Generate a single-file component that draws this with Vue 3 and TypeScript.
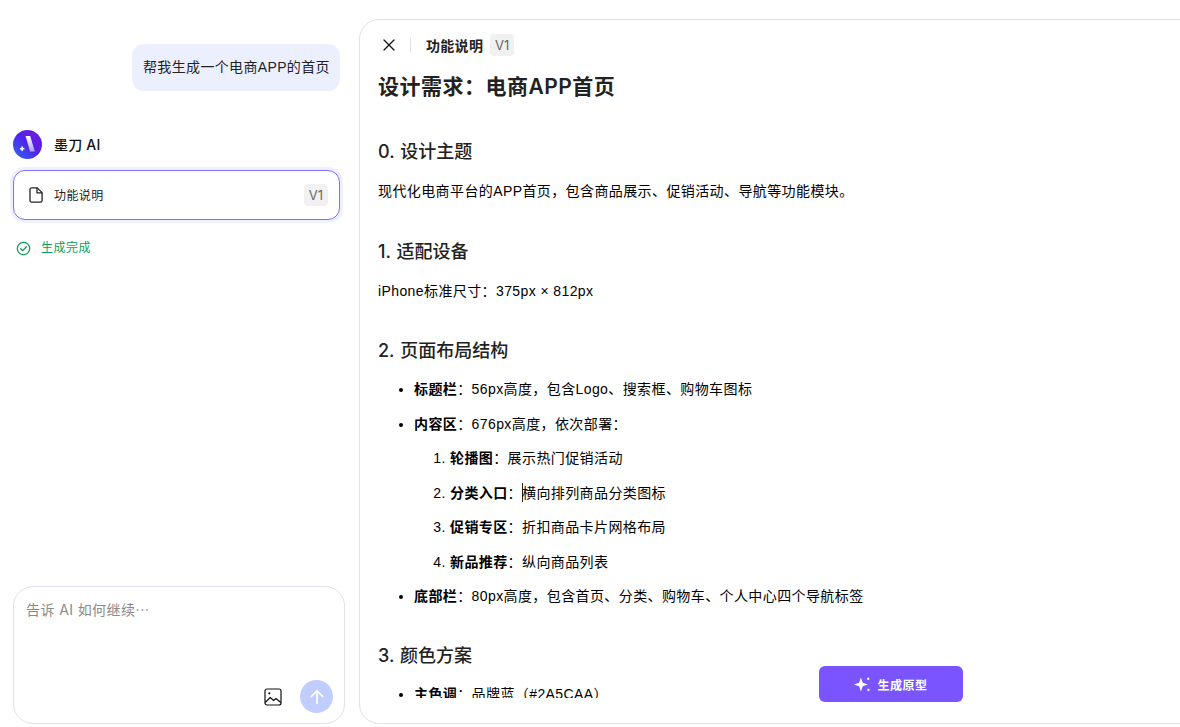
<script setup lang="ts">
const subItems: [string, string][] = [
  ['轮播图', '展示热门促销活动'],
  ['分类入口', '横向排列商品分类图标'],
  ['促销专区', '折扣商品卡片网格布局'],
  ['新品推荐', '纵向商品列表'],
]
</script>

<template>
  <div class="page">
    <aside class="chat">
      <div class="bubble-row"><div class="bubble">帮我生成一个电商APP的首页</div></div>
      <div class="agent">
        <svg class="avatar" viewBox="0 0 29 29" aria-hidden="true">
          <defs>
            <linearGradient id="avg" x1="0" y1="1" x2="1" y2="0">
              <stop offset="0" stop-color="#2a6cf5" />
              <stop offset="0.5" stop-color="#4f26ea" />
              <stop offset="1" stop-color="#7a10d8" />
            </linearGradient>
            <linearGradient id="bar" x1="0" y1="0" x2="0" y2="1">
              <stop offset="0" stop-color="#fff" />
              <stop offset="1" stop-color="#fff" stop-opacity="0.55" />
            </linearGradient>
          </defs>
          <circle cx="14.5" cy="14.5" r="14.5" fill="url(#avg)" />
          <path d="M12.6 6h4.6l4.6 15.5h-4.8z" fill="url(#bar)" />
          <path d="M9.2 16.6v4.4M7 18.8h4.4" stroke="#fff" stroke-width="1.6" />
        </svg>
        <span>墨刀 AI</span>
      </div>
      <div class="doc-card">
        <svg class="doc-icon" viewBox="0 0 14 16" fill="none" stroke="#222" stroke-width="1.3" stroke-linejoin="round" aria-hidden="true">
          <path d="M2.6.9h5.6l4.9 4.7v7.9a1.6 1.6 0 0 1-1.6 1.6H2.6A1.6 1.6 0 0 1 1 13.5V2.5A1.6 1.6 0 0 1 2.6.9z" />
          <path d="M8 1v4.8h5" />
        </svg>
        <span class="doc-name">功能说明</span>
        <span class="ver">V1</span>
      </div>
      <div class="status">
        <svg viewBox="0 0 16 16" fill="none" stroke="#0f9d58" stroke-width="1.4" aria-hidden="true">
          <circle cx="8" cy="8" r="6.6" />
          <path d="M5 8.2l2.2 2.1L11 6.2" stroke-linecap="round" stroke-linejoin="round" />
        </svg>
        <span>生成完成</span>
      </div>
      <div class="composer">
        <div class="placeholder">告诉 AI 如何继续⋯</div>
        <div class="tools">
          <svg class="img-icon" viewBox="0 0 18 18" fill="none" stroke="#111" stroke-width="1.2" aria-hidden="true">
            <rect x="1" y="1" width="16" height="16" rx="2" />
            <circle cx="5.3" cy="5.3" r="1.1" fill="#111" stroke="none" />
            <path d="M1.2 14.5l5-5 3.4 3 2.4-2 4.8 4" stroke-linejoin="round" />
          </svg>
          <div class="send">
            <svg viewBox="0 0 16 16" fill="none" stroke="#fff" stroke-width="1.6" stroke-linecap="round" stroke-linejoin="round" aria-hidden="true">
              <path d="M8 14.5V1.8M2.2 7.6L8 1.8l5.8 5.8" />
            </svg>
          </div>
        </div>
      </div>
    </aside>

    <main class="panel">
      <header class="panel-head">
        <svg class="close" viewBox="0 0 12 12" fill="none" stroke="#111" stroke-width="1.3" stroke-linecap="round" aria-hidden="true">
          <path d="M1 1l10 10M11 1L1 11" />
        </svg>
        <i class="sep"></i>
        <span class="head-title">功能说明</span>
        <span class="ver">V1</span>
      </header>
      <article class="doc">
        <h1>设计需求：电商APP首页</h1>
        <h2 class="first">0. 设计主题</h2>
        <p>现代化电商平台的APP首页，包含商品展示、促销活动、导航等功能模块。</p>
        <h2>1. 适配设备</h2>
        <p>iPhone标准尺寸：375px × 812px</p>
        <h2>2. 页面布局结构</h2>
        <ul>
          <li><b>标题栏</b>：56px高度，包含Logo、搜索框、购物车图标</li>
          <li>
            <b>内容区</b>：676px高度，依次部署：
            <ol>
              <li v-for="(item, i) in subItems" :key="item[0]">
                <b>{{ item[0] }}</b>：<i v-if="i === 1" class="caret"></i>{{ item[1] }}
              </li>
            </ol>
          </li>
          <li><b>底部栏</b>：80px高度，包含首页、分类、购物车、个人中心四个导航标签</li>
        </ul>
        <h2 class="after-list">3. 颜色方案</h2>
        <ul>
          <li><b>主色调</b>：品牌蓝（#2A5CAA）</li>
        </ul>
      </article>
      <button class="gen" type="button">
        <svg viewBox="0 0 16 16" fill="#fff" aria-hidden="true">
          <path d="M6.5 1.5l1.7 4.8 4.8 1.7-4.8 1.7-1.7 4.8-1.7-4.8L0 8l4.8-1.7z" />
          <circle cx="13.4" cy="2.6" r="1.1" />
          <circle cx="13.6" cy="13" r="1.1" />
        </svg>
        生成原型
      </button>
    </main>
  </div>
</template>

<style scoped>
.page {
  display: flex;
  width: 1180px;
  height: 727px;
  overflow: hidden;
  background: #fff;
  color: #111;
  font-family: Inter, "Noto Sans CJK SC", sans-serif;
  font-size: 14px;
}
.chat {
  flex: 0 0 359px;
  display: flex;
  flex-direction: column;
  padding: 44px 14px 3px 13px;
  box-sizing: border-box;
}
.bubble-row { display: flex; justify-content: flex-end; margin-right: 5px; }
.bubble {
  padding: 13px 11px;
  width: 208px;
  height: 47px;
  box-sizing: border-box;
  border-radius: 12px;
  background: #eceffe;
  font-family: "Liberation Sans", "Noto Sans CJK SC", sans-serif;
  line-height: 21px;
  letter-spacing: 0.35px;
  white-space: nowrap;
  color: #222;
}
.agent {
  display: flex;
  align-items: center;
  gap: 12px;
  margin-top: 39px;
  padding-bottom: 1px;
  font-weight: 500;
  letter-spacing: 0.2px;
  color: #111;
}
.agent span { margin-top: -2px; }
.avatar { width: 29px; height: 29px; }
.doc-card {
  display: flex;
  align-items: center;
  height: 50px;
  box-sizing: border-box;
  margin: 10px 5px 0 0;
  padding: 0 11px 2px 15px;
  border: 1px solid #7c6dfb;
  border-radius: 12px;
  box-shadow: 0 0 0 3px #eff0fd;
}
.doc-icon { width: 14px; height: 16px; margin-top: 2px; }
.doc-name { margin-left: 11px; font-size: 12px; letter-spacing: 0.4px; color: #222; }
.ver {
  display: flex;
  align-items: center;
  justify-content: center;
  width: 24px;
  height: 22px;
  border-radius: 4px;
  background: #f1f1f1;
  color: #666;
  font-size: 13px;
}
.doc-card .ver { margin-left: auto; margin-top: 2px; }
.status {
  display: flex;
  align-items: center;
  gap: 10px;
  margin: 19px 0 0 3px;
  color: #0f9d58;
  font-size: 12px;
  line-height: 18px;
  letter-spacing: 0.5px;
}
.status svg { width: 15px; height: 15px; }
.composer {
  display: flex;
  flex-direction: column;
  justify-content: space-between;
  width: 332px;
  height: 138px;
  margin-top: auto;
  padding: 13px 11px 10px 12px;
  box-sizing: border-box;
  border: 1px solid #e0e0ee;
  border-radius: 20px;
}
.placeholder { color: #8a8a8a; line-height: 20px; letter-spacing: 0.4px; }
.tools { display: flex; align-items: center; justify-content: flex-end; gap: 18px; }
.img-icon { width: 18px; height: 18px; }
.send {
  display: flex;
  align-items: center;
  justify-content: center;
  width: 33px;
  height: 33px;
  border-radius: 50%;
  background: #c2cdff;
}
.send svg { width: 16px; height: 16px; }

.panel {
  position: relative;
  flex: 0 0 842px;
  display: flex;
  flex-direction: column;
  height: 705px;
  margin-top: 19px;
  box-sizing: border-box;
  border: 1px solid #e0e0ee;
  border-radius: 20px;
  overflow: hidden;
  background: #fff;
}
.panel-head {
  display: flex;
  align-items: center;
  height: 50px;
  flex: none;
  padding: 0 0 0 23px;
}
.close { width: 12px; height: 12px; }
.sep { width: 1px; height: 14px; margin: 0 15px 0 15px; background: #e0e0ea; }
.head-title { font-weight: 600; margin-right: 7px; letter-spacing: 0.3px; color: #222; }
.doc {
  height: 628px;
  flex: none;
  overflow: hidden;
  padding-left: 18px;
  color: #000;
  font-family: "Liberation Sans", "Noto Sans CJK SC", sans-serif;
  line-height: 24.5px;
  letter-spacing: 0.4px;
}
h1 {
  margin: 0;
  font-family: Inter, "Noto Sans CJK SC", sans-serif;
  font-size: 21px;
  font-weight: 600;
  line-height: 34px;
  letter-spacing: 0.5px;
  color: #222;
}
h2 {
  margin: 34px 0 0;
  font-family: Inter, "Noto Sans CJK SC", sans-serif;
  font-size: 18px;
  font-weight: 500;
  line-height: 28px;
  letter-spacing: 0;
  word-spacing: 1px;
  color: #222;
}
h2.first { margin-top: 34px; }
h2.after-list { margin-top: 33px; }
p { margin: 13px 0 0; }
ul { margin: 12px 0 0; padding: 0 0 0 36px; }
ol { margin: 10px 0 0; padding: 0 0 0 36px; }
li + li { margin-top: 10px; }
b { font-weight: 600; }
.caret {
  display: inline-block;
  width: 1px;
  height: 19px;
  margin-right: -1px;
  vertical-align: -4px;
  background: #222;
}
.gen {
  position: absolute;
  left: 459px;
  top: 646px;
  display: flex;
  align-items: center;
  justify-content: center;
  gap: 6px;
  width: 144px;
  height: 36px;
  padding: 0;
  border: 0;
  border-radius: 6px;
  background: #7a55ff;
  color: #fff;
  font: 600 12px Inter, "Noto Sans CJK SC", sans-serif;
  letter-spacing: 0.5px;
}
.gen svg { width: 17px; height: 17px; }
</style>
